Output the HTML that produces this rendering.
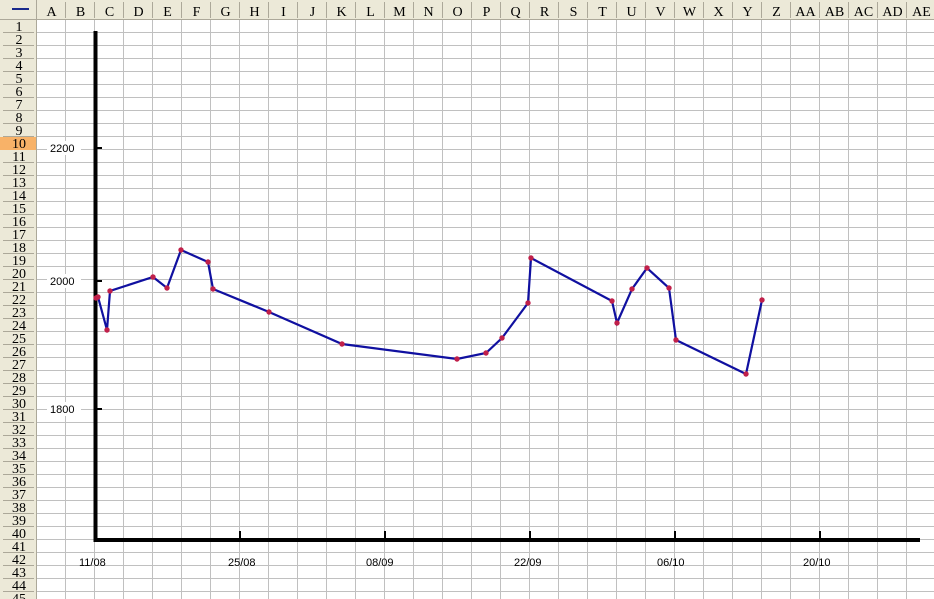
<!DOCTYPE html>
<html><head><meta charset="utf-8"><style>
html,body{margin:0;padding:0;background:#fff;width:934px;height:599px;overflow:hidden}
svg{display:block}
.h{font-family:"Liberation Serif","Noto Serif CJK SC",serif;font-size:14px;fill:#000;text-anchor:middle}
.l{font-family:"Liberation Sans",sans-serif;font-size:11px;fill:#000}
</style></head><body>
<svg width="934" height="599" viewBox="0 0 934 599" xmlns="http://www.w3.org/2000/svg">
<defs>
<pattern id="g" x="37" y="20" width="29" height="13" patternUnits="userSpaceOnUse">
<path d="M28.5 0V13M0 12.5H29" stroke="#c0c0c0" stroke-width="1" fill="none"/>
</pattern>
<pattern id="ch" x="37" y="0" width="29" height="20" patternUnits="userSpaceOnUse">
<path d="M28.5 2V18" stroke="#aca899" stroke-width="1"/>
</pattern>
<pattern id="rh" x="0" y="20" width="37" height="13" patternUnits="userSpaceOnUse">
<path d="M3 12.5H34" stroke="#aca899" stroke-width="1"/>
</pattern>
</defs>
<rect x="37" y="20" width="897" height="579" fill="url(#g)"/>
<rect x="0" y="0" width="934" height="20" fill="#ece9d8"/>
<rect x="37" y="0" width="897" height="20" fill="url(#ch)"/>
<rect x="0" y="20" width="37" height="579" fill="#ece9d8"/>
<rect x="0" y="20" width="37" height="579" fill="url(#rh)"/>
<rect x="0" y="137" width="37" height="13" fill="#f8b268"/>
<line x1="0" y1="19.5" x2="934" y2="19.5" stroke="#aca899"/>
<line x1="36.5" y1="0" x2="36.5" y2="599" stroke="#aca899"/>
<line x1="12" y1="9" x2="29" y2="9" stroke="#1a2a8c" stroke-width="2"/>
<g class="h">
<text x="51.5" y="16">A</text><text x="80.5" y="16">B</text><text x="109.5" y="16">C</text><text x="138.5" y="16">D</text><text x="167.5" y="16">E</text><text x="196.5" y="16">F</text><text x="225.5" y="16">G</text><text x="254.5" y="16">H</text><text x="283.5" y="16">I</text><text x="312.5" y="16">J</text><text x="341.5" y="16">K</text><text x="370.5" y="16">L</text><text x="399.5" y="16">M</text><text x="428.5" y="16">N</text><text x="457.5" y="16">O</text><text x="486.5" y="16">P</text><text x="515.5" y="16">Q</text><text x="544.5" y="16">R</text><text x="573.5" y="16">S</text><text x="602.5" y="16">T</text><text x="631.5" y="16">U</text><text x="660.5" y="16">V</text><text x="689.5" y="16">W</text><text x="718.5" y="16">X</text><text x="747.5" y="16">Y</text><text x="776.5" y="16">Z</text><text x="805.5" y="16">AA</text><text x="834.5" y="16">AB</text><text x="863.5" y="16">AC</text><text x="892.5" y="16">AD</text><text x="921.5" y="16">AE</text>
</g>
<g class="h" style="font-size:14px">
<text x="19" y="31">1</text><text x="19" y="44">2</text><text x="19" y="57">3</text><text x="19" y="70">4</text><text x="19" y="83">5</text><text x="19" y="96">6</text><text x="19" y="109">7</text><text x="19" y="122">8</text><text x="19" y="135">9</text><text x="19" y="148">10</text><text x="19" y="161">11</text><text x="19" y="174">12</text><text x="19" y="187">13</text><text x="19" y="200">14</text><text x="19" y="213">15</text><text x="19" y="226">16</text><text x="19" y="239">17</text><text x="19" y="252">18</text><text x="19" y="265">19</text><text x="19" y="278">20</text><text x="19" y="291">21</text><text x="19" y="304">22</text><text x="19" y="317">23</text><text x="19" y="330">24</text><text x="19" y="343">25</text><text x="19" y="356">26</text><text x="19" y="369">27</text><text x="19" y="382">28</text><text x="19" y="395">29</text><text x="19" y="408">30</text><text x="19" y="421">31</text><text x="19" y="434">32</text><text x="19" y="447">33</text><text x="19" y="460">34</text><text x="19" y="473">35</text><text x="19" y="486">36</text><text x="19" y="499">37</text><text x="19" y="512">38</text><text x="19" y="525">39</text><text x="19" y="538">40</text><text x="19" y="551">41</text><text x="19" y="564">42</text><text x="19" y="577">43</text><text x="19" y="590">44</text><text x="19" y="603">45</text>
</g>
<rect x="47" y="141" width="34" height="14" fill="#fff"/>
<rect x="47" y="274" width="34" height="14" fill="#fff"/>
<rect x="47" y="402" width="34" height="14" fill="#fff"/>
<g class="l">
<text x="50" y="152">2200</text><text x="50" y="285">2000</text><text x="50" y="413">1800</text>
<text x="79" y="566">11/08</text><text x="228" y="566">25/08</text><text x="366" y="566">08/09</text><text x="514" y="566">22/09</text><text x="657" y="566">06/10</text><text x="803" y="566">20/10</text>
</g>
<g stroke="#000">
<line x1="95.5" y1="31" x2="95.5" y2="542" stroke-width="4"/>
<line x1="94" y1="540" x2="920" y2="540" stroke-width="4"/>
<line x1="95" y1="148" x2="102" y2="148" stroke-width="2"/>
<line x1="95" y1="281" x2="102" y2="281" stroke-width="2"/>
<line x1="95" y1="409" x2="102" y2="409" stroke-width="2"/>
<line x1="240" y1="531" x2="240" y2="540" stroke-width="2"/>
<line x1="385" y1="531" x2="385" y2="540" stroke-width="2"/>
<line x1="530" y1="531" x2="530" y2="540" stroke-width="2"/>
<line x1="675" y1="531" x2="675" y2="540" stroke-width="2"/>
<line x1="820" y1="531" x2="820" y2="540" stroke-width="2"/>
</g>
<polyline fill="none" stroke="#1010a0" stroke-width="2.2" points="96,298 98,297 107,330 110,291 153,277 167,288 181,250 208,262 213,289 269,312 342,344 457,359 486,353 502,338 528,303 531,258 612,301 617,323 632,289 647,268 669,288 676,340 746,374 762,300"/>
<g fill="#c0204a">
<circle cx="96" cy="298" r="2.7"/><circle cx="98" cy="297" r="2.7"/><circle cx="107" cy="330" r="2.7"/><circle cx="110" cy="291" r="2.7"/><circle cx="153" cy="277" r="2.7"/><circle cx="167" cy="288" r="2.7"/><circle cx="181" cy="250" r="2.7"/><circle cx="208" cy="262" r="2.7"/><circle cx="213" cy="289" r="2.7"/><circle cx="269" cy="312" r="2.7"/><circle cx="342" cy="344" r="2.7"/><circle cx="457" cy="359" r="2.7"/><circle cx="486" cy="353" r="2.7"/><circle cx="502" cy="338" r="2.7"/><circle cx="528" cy="303" r="2.7"/><circle cx="531" cy="258" r="2.7"/><circle cx="612" cy="301" r="2.7"/><circle cx="617" cy="323" r="2.7"/><circle cx="632" cy="289" r="2.7"/><circle cx="647" cy="268" r="2.7"/><circle cx="669" cy="288" r="2.7"/><circle cx="676" cy="340" r="2.7"/><circle cx="746" cy="374" r="2.7"/><circle cx="762" cy="300" r="2.7"/>
</g>
</svg>
</body></html>
